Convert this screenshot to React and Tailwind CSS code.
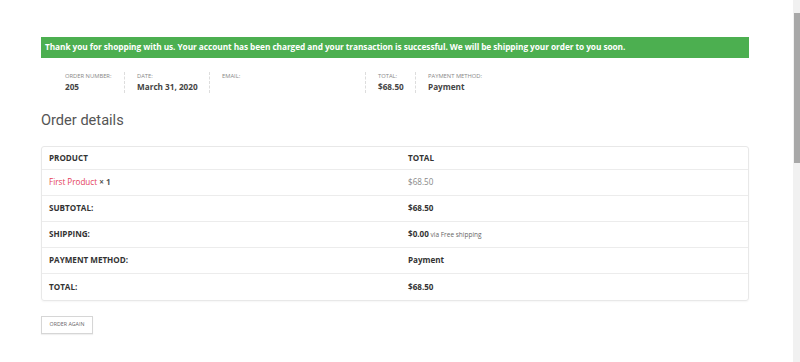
import React from 'react';

const meta = [
  { label: 'Order number:', value: '205', w: 'w-[60px]', border: true },
  { label: 'Date:', value: 'March 31, 2020', w: 'w-[73px]', border: true },
  { label: 'Email:', value: '', w: 'w-[144px]', border: true },
  { label: 'Total:', value: '$68.50', w: 'w-[38px]', border: true },
  { label: 'Payment method:', value: 'Payment', w: 'w-[80px]', border: false },
];

const rows = [
  { label: 'Subtotal:', value: '$68.50' },
  { label: 'Shipping:', value: '$0.00', note: 'via Free shipping' },
  { label: 'Payment method:', value: 'Payment' },
  { label: 'Total:', value: '$68.50' },
];

function App() {
  return (
    <div className="flex h-[362px] w-full overflow-hidden bg-white font-['Open_Sans',sans-serif] text-[#333]">
      <main className="flex-1 pt-[37px] pl-[41px]">
        <div className="w-[708px]">
          <div className="flex h-[21px] items-center bg-[#4caf50] pl-[4px] text-[8.3px] font-bold tracking-[-0.07px] text-white">
            Thank you for shopping with us. Your account has been charged and your transaction is successful. We will be shipping your order to you soon.
          </div>

          <ul className="mt-[14px] flex pl-[24px]">
            {meta.map((m) => (
              <li
                key={m.label}
                className={`${m.w} mr-[12px] h-[21px] shrink-0 ${m.border ? 'border-r border-dashed border-[#ddd]' : ''}`}
              >
                <div className="text-[5.8px] uppercase leading-[9px] text-[#888]">{m.label}</div>
                <div className="text-[8.2px] font-bold leading-[11px] text-[#444]">{m.value}</div>
              </li>
            ))}
          </ul>

          <h2 className="mt-[17px] font-['Roboto',sans-serif] text-[14.6px] leading-[20px] text-[#555]">Order details</h2>

          <div className="mt-[16px] overflow-hidden rounded-[3px] border border-[#e8e8e8] text-[8.1px] shadow-[0_1px_2px_rgba(0,0,0,0.04)]">
            <div className="flex h-[23px] items-center border-b border-[#ececec] font-bold uppercase text-[#333]">
              <div className="w-[358px] pl-[7px]">Product</div>
              <div className="pl-[8px]">Total</div>
            </div>
            <div className="flex h-[26px] items-center border-b border-[#ececec]">
              <div className="w-[358px] pl-[7px]">
                <span className="text-[#e4405a]">First Product</span>
                <span className="font-bold text-[#555]"> × 1</span>
              </div>
              <div className="pl-[8px] text-[#888]">$68.50</div>
            </div>
            {rows.map((r, i) => (
              <div
                key={r.label}
                className={`flex h-[26px] items-center ${i < rows.length - 1 ? 'border-b border-[#ececec]' : ''}`}
              >
                <div className="w-[358px] pl-[7px] font-bold uppercase text-[#333]">{r.label}</div>
                <div className="pl-[8px]">
                  <span className="font-bold text-[#333]">{r.value}</span>
                  {r.note && <span className="text-[6.5px] text-[#666]"> {r.note}</span>}
                </div>
              </div>
            ))}
          </div>

          <button className="mt-[15px] flex h-[18px] w-[52px] items-center justify-center border border-[#d6d6d6] bg-white text-[5.3px] uppercase text-[#666] shadow-[0_1px_1px_rgba(0,0,0,0.06)]">
            Order again
          </button>
        </div>
      </main>
      <div className="flex w-[7px] shrink-0 flex-col bg-[#f1f1f1] pl-[1px]">
        <div className="mt-[13px] h-[150px] bg-[#a8a8a8]" />
      </div>
    </div>
  );
}

export default App;
